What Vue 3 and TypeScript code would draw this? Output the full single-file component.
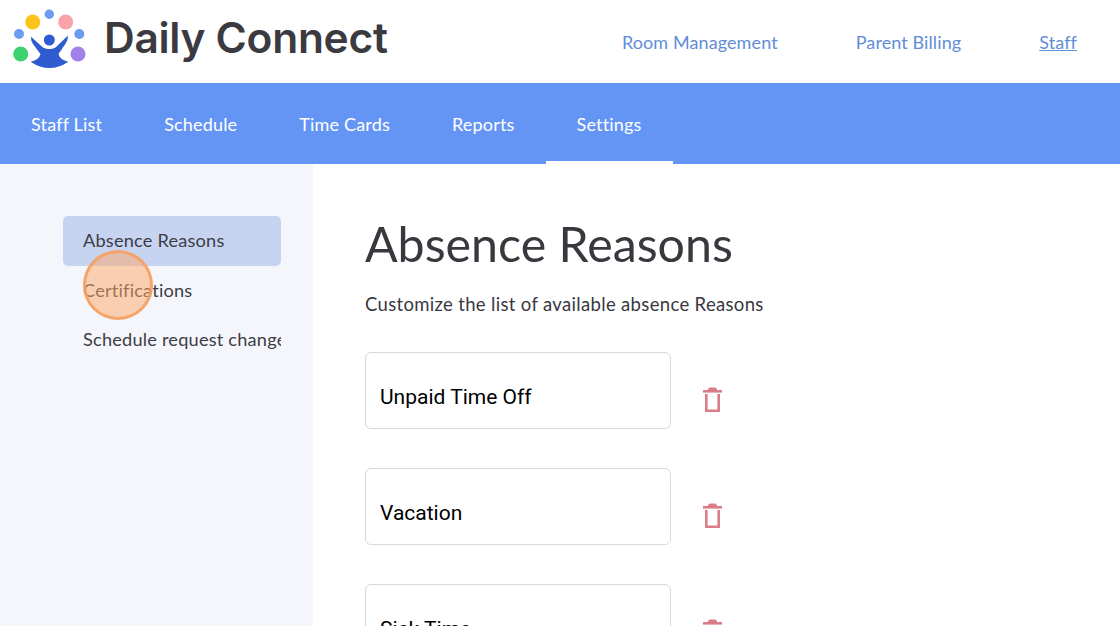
<script setup lang="ts">
const topLinks = ['Room Management', 'Parent Billing', 'Staff']
const tabs = ['Staff List', 'Schedule', 'Time Cards', 'Reports', 'Settings']
const sideItems = ['Absence Reasons', 'Certifications', 'Schedule request changes']
const reasons = ['Unpaid Time Off', 'Vacation', 'Sick Time']
</script>

<template>
  <div class="page">
    <header class="topbar">
      <div class="brand">
        <svg class="logo" width="76" height="64" viewBox="11 8 76 64">
          <circle cx="49.300" cy="14.300" r="4.700" fill="#6b9bf2" />
          <circle cx="32.700" cy="22" r="7.500" fill="#fcc419" />
          <circle cx="65.700" cy="22" r="7.500" fill="#f9a3a8" />
          <circle cx="19" cy="34" r="5" fill="#6b9bf2" />
          <circle cx="79.300" cy="34" r="5" fill="#6b9bf2" />
          <circle cx="20.700" cy="54" r="7.500" fill="#3ed26f" />
          <circle cx="78" cy="54" r="7.500" fill="#a180ea" />
          <circle cx="49.300" cy="40" r="5.500" fill="#2e5bd0" />
          <path d="M31 36.700 L43 47.500 Q49.300 50.500 55.500 47.500 L67.700 35.700 Q68.500 39 66 43 L58.500 54 Q60 60 68.300 61.700 Q49.300 74.500 30.700 61.700 Q39 60 40.500 54 L33 44 Q30.500 40 31 36.700 Z" fill="#2e5bd0" />
        </svg>
        <span class="brand-name">Daily Connect</span>
      </div>
      <nav class="top-links">
        <a v-for="l in topLinks" :key="l" class="top-link" :class="{ current: l === 'Staff' }">{{ l }}</a>
      </nav>
    </header>

    <nav class="tabs">
      <a v-for="t in tabs" :key="t" class="tab" :class="{ active: t === 'Settings' }">{{ t }}</a>
    </nav>

    <div class="body">
      <aside class="sidebar">
        <div v-for="s in sideItems" :key="s" class="side-item" :class="{ selected: s === 'Absence Reasons' }">
          <span class="side-label">{{ s }}</span>
        </div>
        <div class="click-marker"></div>
      </aside>

      <main class="content">
        <h1 class="title">Absence Reasons</h1>
        <p class="desc">Customize the list of available absence Reasons</p>
        <div class="reason-list">
          <div v-for="r in reasons" :key="r" class="reason">
            <div class="reason-input">{{ r }}</div>
            <svg class="trash" width="24" height="28" viewBox="0 0 24 28" fill="none" stroke="#dc7c86" stroke-width="2.600">
              <path d="M2 6.300 H21" />
              <path d="M7 5 Q7 2.500 9.500 2.500 H13.500 Q16 2.500 16 5 Z" fill="#dc7c86" stroke="none" />
              <path d="M5.300 9 V25.700 H17.700 V9" />
            </svg>
          </div>
        </div>
      </main>
    </div>
  </div>
</template>

<style scoped>
.page {
  width: 1120px;
  height: 626px;
  overflow: hidden;
  display: flex;
  flex-direction: column;
  background: #fff;
  font-family: Lato, "Open Sans", sans-serif;
  color: #38383f;
}

.topbar {
  height: 83px;
  flex: none;
  display: flex;
  align-items: center;
  justify-content: space-between;
  padding: 0 43px 0 11px;
}

.brand {
  display: flex;
  align-items: center;
  gap: 17px;
}

.logo {
  margin-top: -3px;
}

.brand-name {
  font-family: Inter, Lato, sans-serif;
  font-size: 42.500px;
  font-weight: 600;
  color: #3a3a40;
  margin-top: -9px;
  letter-spacing: -0.3px;
}

.top-links {
  display: flex;
  gap: 78px;
}

.top-link {
  font-size: 18px;
  color: #5f8dd8;
  letter-spacing: 0.1px;
}

.top-link.current {
  text-decoration: underline;
}

.tabs {
  height: 81px;
  flex: none;
  display: flex;
  background: #6495f5;
}

.tab {
  padding: 0 31px;
  display: flex;
  align-items: center;
  font-size: 18px;
  color: #fff;
  box-sizing: border-box;
  border-bottom: 3px solid transparent;
  border-top: 3px solid transparent;
  letter-spacing: 0.18px;
}

.tab.active {
  border-bottom-color: #fff;
}

.body {
  flex: 1;
  display: flex;
  min-height: 0;
}

.sidebar {
  position: relative;
  width: 313px;
  flex: none;
  box-sizing: border-box;
  background: #f5f6fc;
  padding: 52px 32px 0 63px;
}

.side-item {
  height: 49.500px;
  box-sizing: border-box;
  display: flex;
  align-items: center;
  padding: 0 0 1px 20px;
  border-radius: 5px;
  overflow: hidden;
  white-space: nowrap;
  font-size: 18.200px;
  letter-spacing: 0.2px;
  color: #3d3d45;
}

.side-item.selected {
  background: #c6d4f2;
}

.click-marker {
  position: absolute;
  left: 83px;
  top: 86px;
  width: 70px;
  height: 70px;
  box-sizing: border-box;
  border-radius: 50%;
  background: rgba(255, 165, 100, 0.5);
  border: 3px solid rgba(245, 160, 95, 0.9);
}

.content {
  flex: 1;
  padding: 49px 0 0 52px;
}

.title {
  margin: 0;
  font-size: 48.300px;
  font-weight: 400;
  line-height: 60px;
  color: #38383f;
}

.desc {
  margin: 20px 0 0;
  font-size: 18.500px;
  line-height: 22px;
  letter-spacing: 0.33px;
  color: #38383f;
}

.reason-list {
  margin-top: 37px;
  display: flex;
  flex-direction: column;
  gap: 39px;
}

.reason {
  display: flex;
  align-items: center;
  gap: 30px;
}

.reason-input {
  width: 306px;
  height: 77px;
  flex: none;
  box-sizing: border-box;
  border: 1px solid #d9d9d9;
  border-radius: 6px;
  padding: 30px 14px 0;
  font-family: Roboto, sans-serif;
  font-size: 21px;
  line-height: 28px;
  color: #000;
}

.trash {
  margin-top: 17px;
}
</style>
